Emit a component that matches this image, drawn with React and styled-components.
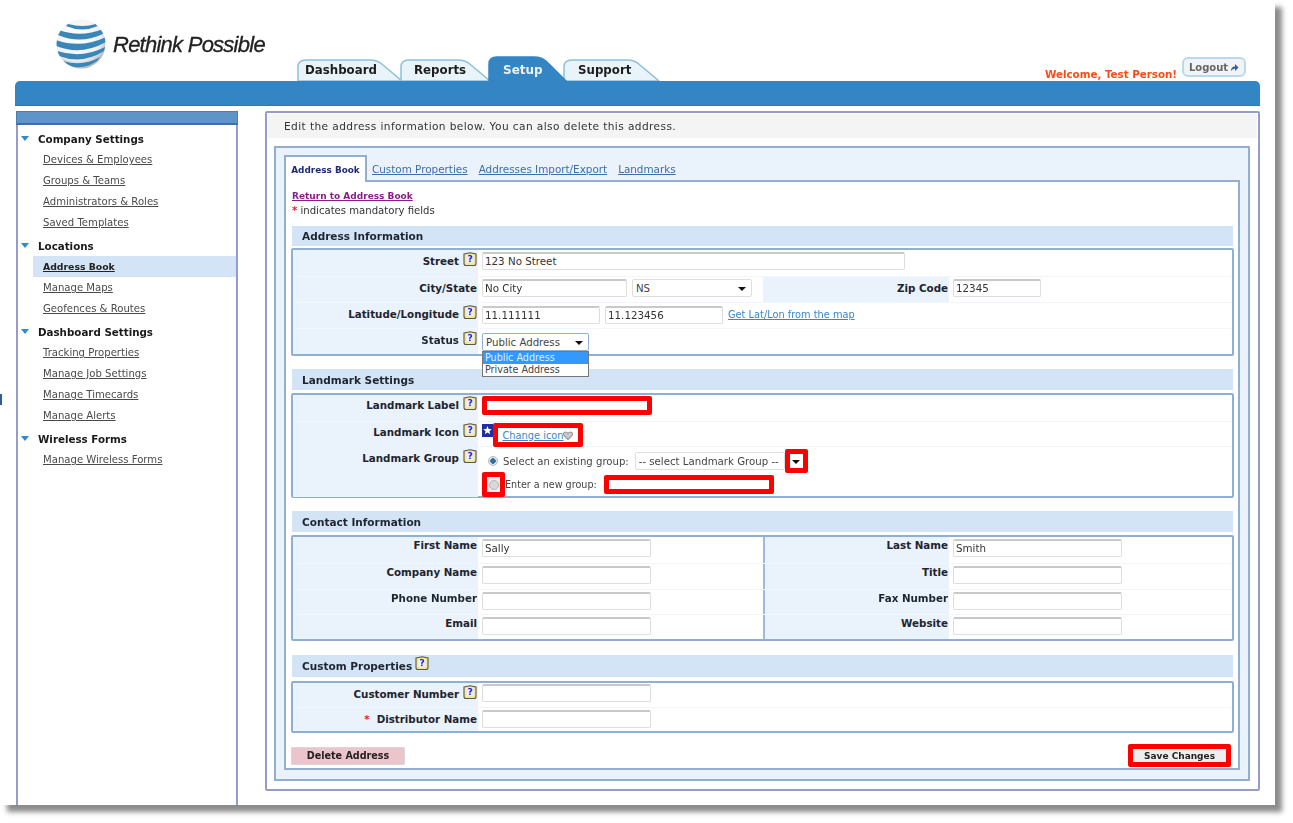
import React from "react";
import styled, { createGlobalStyle } from "styled-components";

const Global = createGlobalStyle`
  html, body { margin: 0; padding: 0; background: #fff; }
  body { font-family: "DejaVu Sans", Verdana, sans-serif; font-size: 10px; color: #222; }
`;

const Page = styled.div`
  width: 1293px;
  height: 823px;
  overflow: hidden;
  filter: blur(0.35px);
`;

const Window = styled.div`
  position: relative;
  width: 1260px;
  height: 805px;
  padding-left: 15px;
  background: #fff;
  box-shadow: 7px 7px 5px #8c8c8c;
`;

const Inner = styled.div`
  width: 1245px;
`;

const Tick = styled.i`
  position: absolute;
  left: 0;
  top: 394px;
  width: 2px;
  height: 11px;
  background: #2c5f92;
`;

const Header = styled.header`
  height: 81px;
  display: flex;
  align-items: flex-end;
`;

const Logo = styled.div`
  display: flex;
  align-items: center;
  gap: 7px;
  width: 242px;
  height: 61px;
  padding: 0 0 13px 41px;
  box-sizing: border-box;
  align-self: flex-start;
  margin-top: 20px;
  svg { flex: none; }
`;

const LogoText = styled.span`
  font-family: "Liberation Sans", Arial, sans-serif;
  font-style: italic;
  font-size: 22px;
  letter-spacing: -0.75px;
  -webkit-text-stroke: 0.3px #222;
  color: #222;
  white-space: nowrap;
  margin-top: 2px;
`;

const Tabs = styled.nav`
  display: flex;
  align-items: flex-end;
  margin-left: 40px;
`;

const TabItem = styled.div`
  position: relative;
  width: ${p => p.$w}px;
  height: ${p => (p.$active ? 25 : 22)}px;
  margin-right: ${p => p.$gap}px;
  padding: ${p => (p.$active ? 3 : 0)}px 0 0 ${p => p.$pad}px;
  box-sizing: border-box;
  display: flex;
  align-items: center;
  font-size: ${p => (p.$active ? 12 : 11.8)}px;
  font-weight: bold;
  color: ${p => (p.$active ? "#e9f4fb" : "#1d1d1d")};
  z-index: ${p => (p.$active ? 2 : 1)};
  span { position: relative; }
  svg { position: absolute; left: 0; top: 0; }
`;

const UserBox = styled.div`
  margin-left: auto;
  margin-right: 14px;
  display: flex;
  align-items: flex-end;
  gap: 5px;
  padding-bottom: 1px;
`;

const Welcome = styled.span`
  font-size: 10.3px;
  font-weight: bold;
  color: #ff4a17;
  white-space: nowrap;
`;

const Logout = styled.div`
  width: 64px;
  height: 20px;
  margin-bottom: 3px;
  box-sizing: border-box;
  border: 2px solid #bcd9ec;
  border-radius: 6px;
  background: #f1f3f6;
  color: #666;
  font-size: 10px;
  font-weight: bold;
  display: flex;
  align-items: center;
  justify-content: center;
  gap: 2px;
`;

const BlueBar = styled.div`
  height: 25px;
  background: #3385c3;
  border-bottom: 1px solid #2a78b8;
  box-sizing: border-box;
  border-radius: 5px 5px 0 0;
`;

const Body = styled.div`
  display: flex;
  align-items: flex-start;
  margin-top: 5px;
  gap: 27px;
`;

const Side = styled.aside`
  width: 222px;
  height: 694px;
  box-sizing: border-box;
  margin-left: 1px;
  border-left: 2px solid #959cca;
  border-right: 2px solid #959cca;
`;

const SideHead = styled.div`
  height: 14px;
  margin: 0 -2px;
  background: #5f94c8;
  border: 1px solid #4a7fb5;
  border-bottom: 2px solid #3f6fa8;
  box-sizing: border-box;
`;

const SideTitle = styled.div`
  display: flex;
  align-items: center;
  height: 21px;
  margin-top: ${p => p.$top}px;
  padding-left: 3px;
  font-size: 10.3px;
  font-weight: bold;
  color: #1a1a1a;
  &::before {
    content: "";
    margin-right: 9px;
    border-left: 4px solid transparent;
    border-right: 4px solid transparent;
    border-top: 5px solid #2f8ac9;
  }
`;

const SideLink = styled.a`
  display: flex;
  align-items: center;
  height: 21px;
  margin-left: 15px;
  padding-left: 10px;
  font-size: ${p => (p.$active ? 9.3 : 10.1)}px;
  color: #4a4a4a;
  text-decoration: underline;
  ${p => p.$active && `background: #d2e4f5; font-weight: bold; color: #222;`}
`;

const Main = styled.main`
  width: 995px;
  height: 680px;
  box-sizing: border-box;
  border: 2px solid #959cca;
  border-radius: 2px;
  padding: 1px 8px 0 7px;
`;

const Intro = styled.div`
  height: 24px;
  margin: 0 -7px 0 -6px;
  padding-left: 16px;
  display: flex;
  align-items: center;
  background: #f4f4f4;
  font-size: 10.6px;
  letter-spacing: 0.4px;
  white-space: nowrap;
  color: #333;
`;

const Panel = styled.div`
  margin-top: 8px;
  height: 635px;
  box-sizing: border-box;
  border: 2px solid #94aed0;
  background: #eaf2fb;
  padding: 7px 8px 0 8px;
`;

const SubTabs = styled.div`
  display: flex;
  align-items: flex-end;
  height: 27px;
  margin-bottom: -2px;
  position: relative;
  z-index: 1;
`;

const SubTabActive = styled.div`
  width: 83px;
  height: 27px;
  box-sizing: border-box;
  background: #fff;
  border: 2px solid #94aed0;
  border-bottom: none;
  display: flex;
  align-items: center;
  justify-content: center;
  font-size: 8.9px;
  font-weight: bold;
  color: #1e2a78;
  margin-right: 5px;
`;

const SubTabLink = styled.a`
  height: 25px;
  padding-bottom: 2px;
  box-sizing: border-box;
  display: flex;
  align-items: center;
  margin-right: 11px;
  font-size: 10.4px;
  color: #3d6fa6;
  text-decoration: underline;
`;

const Content = styled.div`
  height: 590px;
  box-sizing: border-box;
  background: #fff;
  border: 2px solid #94aed0;
  padding: 7px 4px 0 5px;
`;

const ReturnLink = styled.a`
  display: block;
  height: 14px;
  line-height: 14px;
  margin-left: 1px;
  font-size: 9px;
  font-weight: bold;
  color: #8c1c8c;
  text-decoration: underline;
`;

const Mandatory = styled.div`
  height: 15px;
  line-height: 15px;
  margin-left: 1px;
  margin-bottom: 8px;
  font-size: 10.1px;
  color: #333;
  b { color: #ee1c3c; }
`;

const SectionHead = styled.div`
  height: ${p => p.$h || 20}px;
  margin: ${p => p.$top || 0}px 1px ${p => p.$bottom || 2}px 1px;
  padding-left: 10px;
  display: flex;
  align-items: center;
  gap: 3px;
  background: #d2e4f5;
  font-size: 10.5px;
  font-weight: bold;
  color: #1e2430;
  svg { margin-top: -5px; }
`;

const Table = styled.div`
  position: relative;
  border: 2px solid #8fb0d2;
  border-radius: 2px;
  box-sizing: border-box;
`;

const Row = styled.div`
  display: grid;
  grid-template-columns: 185px 285px 186px 1fr;
  box-sizing: border-box;
  height: ${p => p.$h || 26}px;
  & + & { border-top: 1px solid #f1f6fc; }
`;

const Label = styled.div`
  background: #eaf2fb;
  display: flex;
  justify-content: flex-end;
  align-items: flex-start;
  gap: 4px;
  padding: ${p => p.$pt || 5}px 1px 0 0;
  font-size: 10.3px;
  font-weight: bold;
  white-space: nowrap;
  color: #1e2430;
  ${p => p.$split && `border-left: 2px solid #9dbcdc;`}
  b { color: #ee1c3c; margin-right: 3px; }
  svg { margin-top: -3px; }
`;

const Value = styled.div`
  grid-column: span ${p => p.$span || 1};
  display: flex;
  align-items: flex-start;
  gap: 5px;
  padding: ${p => p.$pt ?? 2}px 0 0 4px;
`;

const Input = styled.input`
  width: ${p => p.$w}px;
  height: 18px;
  box-sizing: border-box;
  border: 1px solid #dedede;
  border-top: 2px solid #c9c9c9;
  border-radius: 2px;
  padding: 0 2px 1px;
  background: #fff;
  font-family: "DejaVu Sans", Verdana, sans-serif;
  font-size: 10.3px;
  color: #333;
  outline: none;
`;

const Select = styled.div`
  width: ${p => p.$w}px;
  height: 18px;
  box-sizing: border-box;
  border: 1px solid ${p => (p.$open ? "#8fb0d2" : "#dedede")};
  border-radius: 2px;
  padding: 0 5px 0 3px;
  display: flex;
  align-items: center;
  justify-content: space-between;
  background: #fff;
  font-size: 10.2px;
  white-space: nowrap;
  color: #444;
`;

const Caret = styled.i`
  border-left: 4px solid transparent;
  border-right: 4px solid transparent;
  border-top: 4px solid #111;
  margin-top: 1px;
`;

const OptionList = styled.div`
  position: absolute;
  left: 189px;
  top: 101px;
  width: 107px;
  box-sizing: border-box;
  border: 1px solid #777;
  background: #fff;
  font-size: 9.6px;
  color: #444;
  z-index: 3;
`;

const Option = styled.div`
  height: 12px;
  line-height: 12px;
  padding-left: 2px;
  ${p => p.$on && `background: #3399ff; color: #dff0ff;`}
`;

const Link = styled.a`
  font-size: 9.8px;
  color: #3d86c6;
  text-decoration: underline;
  white-space: nowrap;
  margin-top: ${p => p.$top || 0}px;
`;

const Marked = styled.div`
  display: flex;
  align-items: center;
  justify-content: ${p => (p.$center ? "center" : "flex-start")};
  width: ${p => p.$w}px;
  height: ${p => p.$h}px;
  box-sizing: border-box;
  border: 5px solid #f00;
  border-radius: 2px;
  background: ${p => p.$bg || "#fff"};
  flex: none;
`;

const IconRow = styled.div`
  display: flex;
  align-items: flex-start;
  svg { margin-top: 1px; }
`;

const GroupCol = styled.div`
  display: flex;
  flex-direction: column;
`;

const GroupRow = styled.div`
  display: flex;
  align-items: center;
  height: ${p => p.$h}px;
  margin-top: ${p => p.$top || 0}px;
  padding-left: ${p => p.$pad || 0}px;
  color: #444;
  white-space: nowrap;
`;

const GroupText = styled.span`
  font-size: ${p => p.$size}px;
  margin: 0 ${p => p.$right}px 0 ${p => p.$left || 0}px;
`;

const Radio = styled.i`
  display: block;
  width: 10px;
  height: 10px;
  box-sizing: border-box;
  border-radius: 50%;
  flex: none;
  border: 1px solid #b5b5b5;
  background: ${p => (p.$on
    ? "radial-gradient(circle, #2f6f9f 0 2.5px, #e8e8e8 3px)"
    : "#d8d8d8")};
`;

const Buttons = styled.div`
  display: flex;
  justify-content: space-between;
  align-items: center;
  margin-top: 11px;
  margin-right: 3px;
`;

const DeleteBtn = styled.div`
  width: 114px;
  height: 18px;
  box-sizing: border-box;
  display: flex;
  align-items: center;
  justify-content: center;
  background: #eec4cc;
  border: 1px solid #d8d8d8;
  font-size: 9.6px;
  font-weight: bold;
  color: #222;
`;

const SaveText = styled.span`
  font-size: 9px;
  font-weight: bold;
  color: #222;
  white-space: nowrap;
`;

const Help = () => (
  <svg width="14" height="15" viewBox="0 0 14 15">
    <path d="M1 2 L7 .8 L13 2 V11.5 Q13 13.5 11 13.5 H3 Q1 13.5 1 11.5 Z" fill="#f2e6a0" stroke="#5a5840" strokeWidth="1.1" />
    <rect x="3.4" y="3" width="7.2" height="7.6" fill="#eef0ff" />
    <text x="7" y="10" textAnchor="middle" fontSize="9" fontWeight="bold" fontFamily="DejaVu Sans" fill="#1c1ce8">?</text>
  </svg>
);

const Globe = () => (
  <svg width="50" height="50" viewBox="0 0 50 50">
    <defs>
      <radialGradient id="gl" cx="0.42" cy="0.35" r="0.75">
        <stop offset="0" stopColor="#ffffff" />
        <stop offset="0.65" stopColor="#eef0f2" />
        <stop offset="1" stopColor="#8f99a3" />
      </radialGradient>
      <clipPath id="gc"><circle cx="25" cy="25" r="24.5" /></clipPath>
    </defs>
    <circle cx="25" cy="25" r="24.5" fill="url(#gl)" />
    <g clipPath="url(#gc)" fill="#3a86b8">
      <path d="M12 5 Q27 9 40 5 L42 7 Q26 14 10 7 Z" />
      <path d="M3 11 Q25 19 47 10 L49 14 Q25 26 2 16 Z" />
      <path d="M0 21 Q25 30 50 18 L50 23 Q25 37 0 27 Z" />
      <path d="M1 32 Q26 40 49 28 L48 32 Q26 46 3 37 Z" />
      <path d="M7 42 Q27 48 44 38 L41 42 Q26 52 12 46 Z" />
    </g>
  </svg>
);

const tabPath = (w, h) =>
  `M1 ${h} V8 Q1 1 9 1 H${w - 34} Q${w - 26} 1 ${w - 21} 6 L${w - 2} ${h} Z`;

const Tab = ({ label, w, pad, gap, active }) => {
  const h = active ? 25 : 22;
  return (
    <TabItem $w={w} $pad={pad} $gap={gap} $active={active}>
      <svg width={w} height={h}>
        <path d={tabPath(w, h)} fill={active ? "#3385c3" : "#e9f4fa"} stroke={active ? "#3385c3" : "#8fc0da"} strokeWidth="1.5" />
      </svg>
      <span>{label}</span>
    </TabItem>
  );
};

const sideMenu = [
  { title: "Company Settings", top: 3, links: ["Devices & Employees", "Groups & Teams", "Administrators & Roles", "Saved Templates"] },
  { title: "Locations", top: 2, links: ["Address Book", "Manage Maps", "Geofences & Routes"], active: "Address Book" },
  { title: "Dashboard Settings", top: 2, links: ["Tracking Properties", "Manage Job Settings", "Manage Timecards", "Manage Alerts"] },
  { title: "Wireless Forms", top: 2, links: ["Manage Wireless Forms"] },
];

const contactRows = [
  ["First Name", "Sally", "Last Name", "Smith", 26],
  ["Company Name", "", "Title", "", 26],
  ["Phone Number", "", "Fax Number", "", 25],
  ["Email", "", "Website", "", 25],
];

const App = () => (
  <Page>
    <Global />
    <Window>
      <Tick />
      <Inner>
        <Header>
          <Logo>
            <Globe />
            <LogoText>Rethink Possible</LogoText>
          </Logo>
          <Tabs>
            <Tab label="Dashboard" w={107} pad={8} gap={-4} />
            <Tab label="Reports" w={92} pad={14} gap={-4} />
            <Tab label="Setup" w={80} pad={15} gap={-5} active />
            <Tab label="Support" w={98} pad={15} gap={0} />
          </Tabs>
          <UserBox>
            <Welcome>Welcome, Test Person!</Welcome>
            <Logout>
              Logout
              <svg width="9" height="9" viewBox="0 0 9 9">
                <path d="M1 8 Q1 3.5 5 3.5 V1 L8.5 4.5 L5 8 V5.5 Q2.5 5.5 1 8 Z" fill="#2f5f9f" />
              </svg>
            </Logout>
          </UserBox>
        </Header>
        <BlueBar />
        <Body>
          <Side>
            <SideHead />
            {sideMenu.map(s => (
              <React.Fragment key={s.title}>
                <SideTitle $top={s.top}>{s.title}</SideTitle>
                {s.links.map(l => (
                  <SideLink key={l} $active={l === s.active}>{l}</SideLink>
                ))}
              </React.Fragment>
            ))}
          </Side>
          <Main>
            <Intro>Edit the address information below. You can also delete this address.</Intro>
            <Panel>
              <SubTabs>
                <SubTabActive>Address Book</SubTabActive>
                <SubTabLink>Custom Properties</SubTabLink>
                <SubTabLink>Addresses Import/Export</SubTabLink>
                <SubTabLink>Landmarks</SubTabLink>
              </SubTabs>
              <Content>
                <ReturnLink>Return to Address Book</ReturnLink>
                <Mandatory><b>*</b> indicates mandatory fields</Mandatory>

                <SectionHead>Address Information</SectionHead>
                <Table>
                  <Row>
                    <Label>Street <Help /></Label>
                    <Value $span={3}><Input $w={423} defaultValue="123 No Street" /></Value>
                  </Row>
                  <Row>
                    <Label>City/State</Label>
                    <Value>
                      <Input $w={145} defaultValue="No City" />
                      <Select $w={120}>NS<Caret /></Select>
                    </Value>
                    <Label>Zip Code</Label>
                    <Value><Input $w={88} defaultValue="12345" /></Value>
                  </Row>
                  <Row>
                    <Label>Latitude/Longitude <Help /></Label>
                    <Value $span={3} $pt={3}>
                      <Input $w={118} defaultValue="11.111111" />
                      <Input $w={118} defaultValue="11.123456" />
                      <Link $top={3}>Get Lat/Lon from the map</Link>
                    </Value>
                  </Row>
                  <Row>
                    <Label>Status <Help /></Label>
                    <Value $span={3} $pt={4}><Select $w={107} $open>Public Address<Caret /></Select></Value>
                  </Row>
                  <OptionList>
                    <Option $on>Public Address</Option>
                    <Option>Private Address</Option>
                  </OptionList>
                </Table>

                <SectionHead $top={13} $h={21} $bottom={3}>Landmark Settings</SectionHead>
                <Table>
                  <Row>
                    <Label $pt={4}>Landmark Label <Help /></Label>
                    <Value $span={3} $pt={1}><Marked $w={170} $h={19} /></Value>
                  </Row>
                  <Row $h={25}>
                    <Label $pt={4}>Landmark Icon <Help /></Label>
                    <Value $span={3} $pt={1}>
                      <IconRow>
                        <svg width="11" height="13" viewBox="0 0 11 13">
                          <rect width="11" height="13" fill="#1f2f9f" />
                          <path d="M5.5 2 L6.7 5 L9.8 5.2 L7.4 7.2 L8.2 10.2 L5.5 8.5 L2.8 10.2 L3.6 7.2 L1.2 5.2 L4.3 5 Z" fill="#fff" />
                        </svg>
                        <Marked $w={90} $h={24} $center>
                          <Link>Change icon</Link>
                          <svg width="10" height="9" viewBox="0 0 10 9">
                            <path d="M5 8.5 L1 4.5 Q-.5 1.5 2.5 1 Q4.2 1 5 2.5 Q5.8 1 7.5 1 Q10.5 1.5 9 4.5 Z" fill="#ccc" stroke="#999" strokeWidth="1.2" />
                          </svg>
                        </Marked>
                      </IconRow>
                    </Value>
                  </Row>
                  <Row $h={50}>
                    <Label>Landmark Group <Help /></Label>
                    <Value $span={3} $pt={2}>
                      <GroupCol>
                        <GroupRow $h={24} $pad={6}>
                          <Radio $on />
                          <GroupText $size={10.1} $left={5} $right={6}>Select an existing group:</GroupText>
                          <Select $w={150}>-- select Landmark Group --</Select>
                          <Marked $w={23} $h={24} $center><Caret /></Marked>
                        </GroupRow>
                        <GroupRow $h={25} $top={-1}>
                          <Marked $w={23} $h={25} $center $bg="#eee"><Radio /></Marked>
                          <GroupText $size={9.6} $right={7}>Enter a new group:</GroupText>
                          <Marked $w={170} $h={19} />
                        </GroupRow>
                      </GroupCol>
                    </Value>
                  </Row>
                </Table>

                <SectionHead $top={13} $h={21} $bottom={3}>Contact Information</SectionHead>
                <Table>
                  {contactRows.map(([a, av, b, bv, h]) => (
                    <Row key={a} $h={h}>
                      <Label $pt={2}>{a}</Label>
                      <Value><Input $w={169} defaultValue={av} /></Value>
                      <Label $pt={2} $split>{b}</Label>
                      <Value><Input $w={169} defaultValue={bv} /></Value>
                    </Row>
                  ))}
                </Table>

                <SectionHead $top={14} $h={22} $bottom={4}>Custom Properties <Help /></SectionHead>
                <Table>
                  <Row $h={24}>
                    <Label>Customer Number <Help /></Label>
                    <Value $span={3} $pt={1}><Input $w={169} /></Value>
                  </Row>
                  <Row $h={24}>
                    <Label><b>*</b> Distributor Name</Label>
                    <Value $span={3} $pt={2}><Input $w={169} /></Value>
                  </Row>
                </Table>

                <Buttons>
                  <DeleteBtn>Delete Address</DeleteBtn>
                  <Marked $w={103} $h={23} $center $bg="#eee"><SaveText>Save Changes</SaveText></Marked>
                </Buttons>
              </Content>
            </Panel>
          </Main>
        </Body>
      </Inner>
    </Window>
  </Page>
);

export default App;
